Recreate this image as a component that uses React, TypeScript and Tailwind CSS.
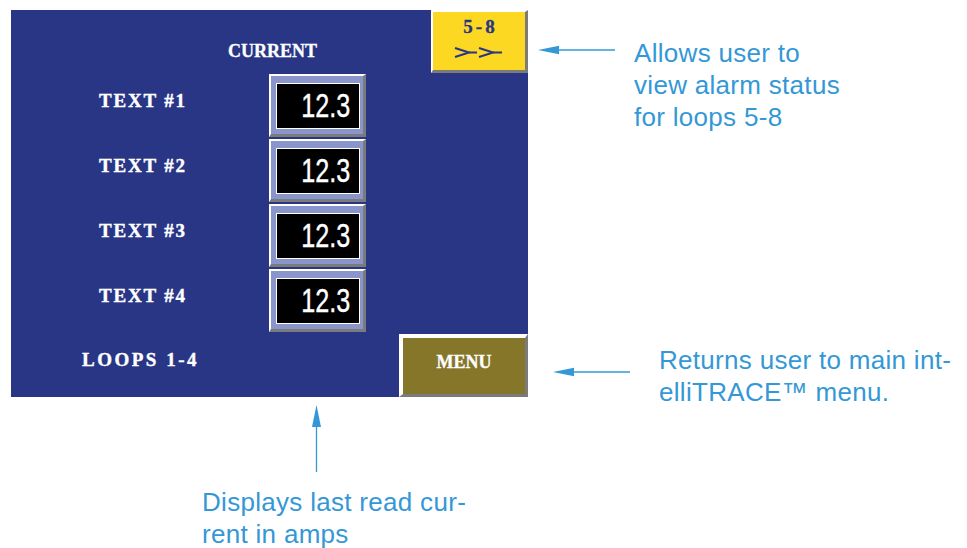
import React from "react";

// HMI screen colours
const rows = ["TEXT #1", "TEXT #2", "TEXT #3", "TEXT #4"];

const panelFont =
  "font-['Liberation_Serif',serif] font-bold text-[19px] leading-none whitespace-pre";

function LeftArrow() {
  return (
    <svg width="78" height="12" viewBox="0 0 78 12" className="shrink-0">
      <polygon points="1,6 22,1.8 22,10.2" fill="#3498d6" />
      <line x1="21" y1="6" x2="78" y2="6" stroke="#3498d6" strokeWidth="1.3" />
    </svg>
  );
}

function UpArrow() {
  return (
    <svg width="11" height="67" viewBox="0 0 11 67" className="block">
      <polygon points="5.5,0 1,22 10,22" fill="#3498d6" />
      <line x1="5.5" y1="21" x2="5.5" y2="67" stroke="#3498d6" strokeWidth="1.3" />
    </svg>
  );
}

function ValueBox() {
  return (
    <div className="w-[97px] h-[63px] border-t-2 border-l-2 border-white border-r-[3px] border-b-[3px] border-r-[#7b7b7b] border-b-[#7b7b7b] bg-[#8a95cb] pt-[7px] pl-[5px]">
      <div className="w-[84px] h-[46px] bg-black border border-white flex items-center justify-end pr-[9px] pb-[2px]">
        <span className="font-['Liberation_Sans',sans-serif] text-[34px] leading-none text-white scale-x-[0.74] origin-right [-webkit-text-stroke:0.4px_white]">
          12.3
        </span>
      </div>
    </div>
  );
}

export default function App() {
  return (
    <div className="w-[967px] h-[548px] bg-white flex font-['Liberation_Sans',Arial,sans-serif] text-[#3498d6] text-[26px] leading-[32px] tracking-[0.3px]">
      {/* screen + bottom note */}
      <div className="w-[528px] shrink-0 pl-[11px] pt-[10px]">
        <div className="w-[517px] h-[387px] bg-[#283685] flex flex-col text-white tracking-normal leading-none">
          <div className="h-[64px] flex items-start">
            <div className="pl-[217px] pt-[32px] font-['Liberation_Serif',serif] font-bold text-[18px] leading-none [-webkit-text-stroke:0.3px_white]">
              CURRENT
            </div>
            <div className="ml-auto w-[97px] h-[63px] bg-[#fdd822] border-t-2 border-l-2 border-white border-r-[3px] border-b-[3px] border-r-[#7b7b7b] border-b-[#7b7b7b] flex flex-col items-center">
              <div className={`mt-[5px] pl-[3px] text-[#283685] tracking-[3px] [-webkit-text-stroke:0.3px_#283685] ${panelFont}`}>
                5-8
              </div>
              <svg width="50" height="11" viewBox="0 0 50 11" className="mt-[11px]">
                <g fill="none" stroke="#283685" strokeWidth="2">
                  <polyline points="1,1 15,5.5 1,10" />
                  <line x1="15" y1="5.5" x2="23" y2="5.5" />
                  <polyline points="25,1 39,5.5 25,10" />
                  <line x1="39" y1="5.5" x2="48" y2="5.5" />
                </g>
              </svg>
            </div>
          </div>

          {rows.map((label) => (
            <div key={label} className="h-[65px] flex items-start">
              <div className={`w-[258px] pl-[88px] pt-[17px] tracking-[1.8px] [-webkit-text-stroke:0.4px_white] ${panelFont}`}>
                {label}
              </div>
              <ValueBox />
            </div>
          ))}

          <div className="flex-1 flex items-start">
            <div className={`pl-[71px] pt-[16px] tracking-[2.5px] [-webkit-text-stroke:0.4px_white] ${panelFont}`}>
              LOOPS 1-4
            </div>
            <div className="ml-auto w-[129px] h-[63px] bg-[#857629] border-t-4 border-l-4 border-white border-r-[3px] border-b-[3px] border-r-[#7b7b7b] border-b-[#7b7b7b] flex justify-center pt-[15px]">
              <span className="font-['Liberation_Serif',serif] font-bold text-[18px] leading-none [-webkit-text-stroke:0.3px_white]">
                MENU
              </span>
            </div>
          </div>
        </div>

        <div className="ml-[300px] mt-[8px]">
          <UpArrow />
        </div>
        <div className="ml-[191px] mt-[14px]">
          Displays last read cur-
          <br />
          rent in amps
        </div>
      </div>

      {/* side notes */}
      <div className="flex-1 flex flex-col">
        <div className="mt-[37px] flex items-start">
          <div className="ml-[9px] mt-[7px]">
            <LeftArrow />
          </div>
          <div className="ml-[19px]">
            Allows user to
            <br />
            view alarm status
            <br />
            for loops 5-8
          </div>
        </div>
        <div className="mt-[211px] flex items-start">
          <div className="ml-[24px] mt-[22px]">
            <LeftArrow />
          </div>
          <div className="ml-[29px]">
            Returns user to main int-
            <br />
            elliTRACE™ menu.
          </div>
        </div>
      </div>
    </div>
  );
}
